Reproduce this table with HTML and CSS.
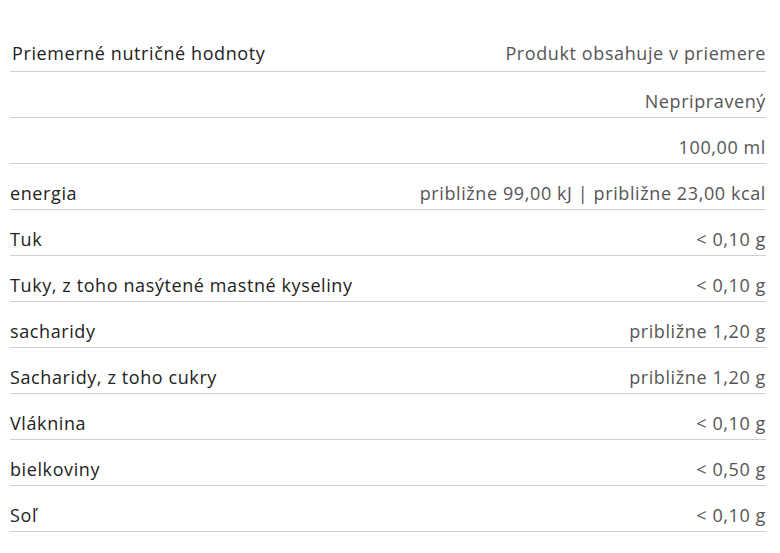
FILE: index.html
```html
<!DOCTYPE html>
<html lang="sk">
<head>
  <meta charset="UTF-8">
  <title>Nutričné hodnoty</title>
  <link rel="stylesheet" href="styles.css">
</head>
<body>
  <div class="nutrition">
    <table class="nutrition-table">
      <thead>
        <tr>
          <th class="label">Priemerné nutričné hodnoty</th>
          <th class="value">Produkt obsahuje v priemere</th>
        </tr>
      </thead>
      <tbody>
        <tr><td class="label"></td><td class="value">Nepripravený</td></tr>
        <tr><td class="label"></td><td class="value">100,00 ml</td></tr>
        <tr><td class="label">energia</td><td class="value">približne 99,00 kJ | približne 23,00 kcal</td></tr>
        <tr><td class="label">Tuk</td><td class="value">&lt; 0,10 g</td></tr>
        <tr><td class="label">Tuky, z toho nasýtené mastné kyseliny</td><td class="value">&lt; 0,10 g</td></tr>
        <tr><td class="label">sacharidy</td><td class="value">približne 1,20 g</td></tr>
        <tr><td class="label">Sacharidy, z toho cukry</td><td class="value">približne 1,20 g</td></tr>
        <tr><td class="label">Vláknina</td><td class="value">&lt; 0,10 g</td></tr>
        <tr><td class="label">bielkoviny</td><td class="value">&lt; 0,50 g</td></tr>
        <tr><td class="label">Soľ</td><td class="value">&lt; 0,10 g</td></tr>
      </tbody>
    </table>
  </div>
</body>
</html>
```

FILE: styles.css
```css
body {
  margin: 0;
  background: #fff;
  font-family: "Open Sans", "Noto Sans", sans-serif;
}

.nutrition {
  padding: 26px 14px 0 10px;
}

.nutrition-table {
  width: 100%;
  border-collapse: collapse;
  font-size: 18px;
  line-height: 24px;
  letter-spacing: 0.6px;
}

.nutrition-table th,
.nutrition-table td {
  border-bottom: 1px solid #cfcfcf;
  font-weight: 500;
  padding: 15px 0 6px;
}

.nutrition-table td {
  padding: 17px 0 4px;
}

.nutrition-table th.label {
  padding-left: 2px;
}

.label {
  text-align: left;
  color: #222;
}

.value {
  text-align: right;
  color: #555;
}
```
